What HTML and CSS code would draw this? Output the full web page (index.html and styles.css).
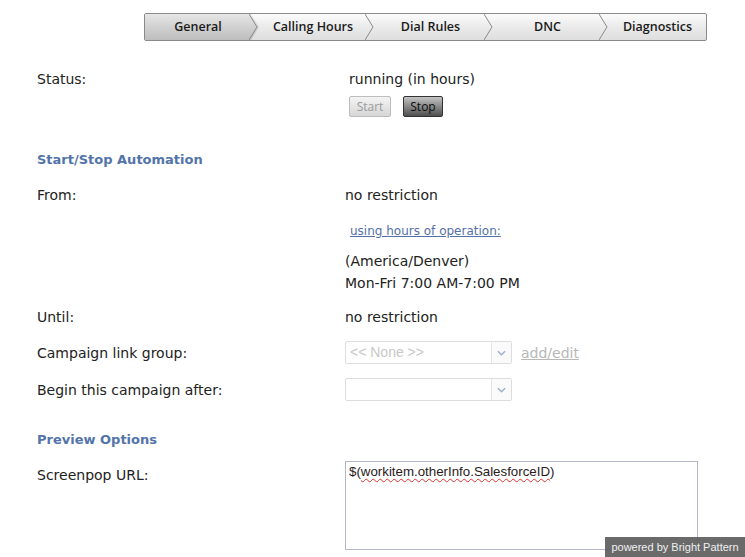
FILE: index.html
```html
<!DOCTYPE html>
<html>
<head>
<meta charset="utf-8">
<link rel="stylesheet" href="styles.css">
</head>
<body>
<div class="page">
  <div class="tabbar">
    <div class="tab active t1">General<svg class="chev" viewBox="0 0 10 26" width="10" height="26"><polyline points="0,0 8,13 0,26" fill="none" stroke="#8a8a8a" stroke-width="1"/></svg></div>
    <div class="tab t2">Calling Hours<svg class="chev" viewBox="0 0 10 26" width="10" height="26"><polyline points="0,0 8,13 0,26" fill="none" stroke="#8a8a8a" stroke-width="1"/></svg></div>
    <div class="tab t3">Dial Rules<svg class="chev" viewBox="0 0 10 26" width="10" height="26"><polyline points="0,0 8,13 0,26" fill="none" stroke="#8a8a8a" stroke-width="1"/></svg></div>
    <div class="tab t4">DNC<svg class="chev" viewBox="0 0 10 26" width="10" height="26"><polyline points="0,0 8,13 0,26" fill="none" stroke="#8a8a8a" stroke-width="1"/></svg></div>
    <div class="tab t5">Diagnostics</div>
  </div>

  <div class="row status-row">
    <div class="label">Status:</div>
    <div class="value status-value">
      <div>running (in hours)</div>
      <div class="buttons">
        <span class="btn disabled">Start</span>
        <span class="btn dark">Stop</span>
      </div>
    </div>
  </div>

  <div class="heading h1">Start/Stop Automation</div>

  <div class="row from-row">
    <div class="label">From:</div>
    <div class="value">
      <div>no restriction</div>
      <div class="hours-link"><a>using hours of operation:</a></div>
      <div class="tz">(America/Denver)</div>
      <div class="tz2">Mon-Fri 7:00 AM-7:00 PM</div>
    </div>
  </div>

  <div class="row until-row">
    <div class="label">Until:</div>
    <div class="value">no restriction</div>
  </div>

  <div class="row sel-row first-sel">
    <div class="label">Campaign link group:</div>
    <div class="value sel-wrap">
      <div class="select"><span class="sel-text">&lt;&lt; None &gt;&gt;</span><span class="sel-arrow"><svg viewBox="0 0 10 6" width="9" height="6"><polyline points="1,1 5,5 9,1" fill="none" stroke="#9fb0c8" stroke-width="1.6"/></svg></span></div>
      <a class="addedit">add/edit</a>
    </div>
  </div>

  <div class="row sel-row second-sel">
    <div class="label">Begin this campaign after:</div>
    <div class="value sel-wrap">
      <div class="select"><span class="sel-text"></span><span class="sel-arrow"><svg viewBox="0 0 10 6" width="9" height="6"><polyline points="1,1 5,5 9,1" fill="none" stroke="#9fb0c8" stroke-width="1.6"/></svg></span></div>
    </div>
  </div>

  <div class="heading h2">Preview Options</div>

  <div class="row url-row">
    <div class="label url-label">Screenpop URL:</div>
    <div class="value">
      <div class="textarea">$(<span class="spell">workitem.otherInfo.SalesforceID</span>)</div>
    </div>
  </div>
</div>
<div class="powered">powered by Bright Pattern</div>
</body>
</html>
```
FILE: styles.css
```css
html, body {
  margin: 0;
  padding: 0;
  background: #fff;
}
body {
  font-family: "DejaVu Sans", Verdana, sans-serif;
  font-size: 14px;
  color: #222;
  width: 745px;
  height: 557px;
  overflow: hidden;
  position: relative;
}
.page {
  padding: 13px 0 0 37px;
}
.tabbar {
  display: flex;
  margin-left: 107px;
  width: 561px;
  height: 26px;
  border: 1px solid #8a8a8a;
  border-radius: 2px;
  background: linear-gradient(#fbfbfb, #e9e9e9 55%, #dedede);
  font-family: "Open Sans", "Liberation Sans", sans-serif;
  font-weight: 600;
  font-size: 12.5px;
  color: #1a1a1a;
}
.tab {
  position: relative;
  flex: none;
  display: flex;
  align-items: center;
  justify-content: center;
  line-height: 26px;
  box-sizing: border-box;
  padding-left: 8px;
}
.t1 { width: 106px; padding-left: 0; }
.t2 { width: 116px; }
.t3 { width: 119px; }
.t4 { width: 115px; }
.t5 { flex: 1 1 auto; }
.tab.active {
  background: linear-gradient(#e6e6e6, #cfcfcf 55%, #bdbdbd);
}
.tab.active::after {
  content: "";
  position: absolute;
  right: -8px;
  top: 0;
  width: 8px;
  height: 26px;
  background: linear-gradient(#e6e6e6, #cfcfcf 55%, #bdbdbd);
  clip-path: polygon(0 0, 100% 50%, 0 100%);
  z-index: 1;
}
.chev {
  position: absolute;
  right: -8px;
  top: 0;
  z-index: 2;
}
.row {
  display: flex;
}
.label {
  width: 308px;
  flex: none;
}
.status-row {
  margin-top: 29px;
  line-height: 18px;
}
.status-value {
  padding-left: 4px;
}
.buttons {
  display: flex;
  gap: 12px;
  margin-top: 8px;
}
.btn {
  display: inline-flex;
  align-items: center;
  justify-content: center;
  box-sizing: border-box;
  height: 21px;
  border-radius: 2px;
  font-family: "Open Sans", "Liberation Sans", sans-serif;
  font-size: 12px;
}
.btn.disabled {
  width: 42px;
  border: 1px solid #bdbdbd;
  background: linear-gradient(#f4f4f4, #d6d6d6);
  color: #9a9a9a;
}
.btn.dark {
  width: 40px;
  border: 1px solid #333;
  background: linear-gradient(#c4c4c4, #838383 55%, #4e4e4e);
  color: #0c0c0c;
}
.heading {
  font-weight: bold;
  color: #5374a9;
  font-size: 13px;
  line-height: 18px;
}
.h1 {
  margin-top: 34px;
}
.from-row {
  margin-top: 17px;
  line-height: 18px;
}
.hours-link {
  font-size: 12px;
  margin: 20px 0 0 5px;
  line-height: 14px;
}
.hours-link a, .addedit {
  text-decoration: underline;
}
.hours-link a {
  color: #5470a8;
}
.tz {
  margin-top: 12px;
  line-height: 22px;
}
.tz2 {
  line-height: 22px;
}
.until-row {
  margin-top: 14px;
  line-height: 18px;
}
.sel-row {
  align-items: center;
}
.first-sel {
  margin-top: 15px;
}
.second-sel {
  margin-top: 14px;
}
.sel-wrap {
  display: flex;
  align-items: center;
  gap: 9px;
}
.select {
  box-sizing: border-box;
  width: 167px;
  height: 23px;
  border: 1px solid #dcdde0;
  border-radius: 2px;
  display: flex;
  background: #fff;
}
.sel-text {
  flex: 1;
  color: #c8c8c8;
  font-family: "Liberation Sans", Arial, sans-serif;
  font-size: 14px;
  line-height: 21px;
  padding-left: 4px;
}
.sel-arrow {
  width: 19px;
  border-left: 1px solid #e4e4e6;
  display: flex;
  align-items: center;
  justify-content: center;
  background: #fafafa;
}
.addedit {
  color: #b8b8b8;
  font-size: 14px;
}
.h2 {
  margin-top: 30px;
}
.url-row {
  margin-top: 12px;
}
.url-label {
  padding-top: 5px;
  line-height: 18px;
}
.textarea {
  box-sizing: border-box;
  width: 353px;
  height: 89px;
  border: 1px solid #b4b7c9;
  padding: 2px 2px 2px 3px;
  font-family: "Liberation Sans", Arial, sans-serif;
  font-size: 13.3px;
  color: #2a1a1a;
  line-height: 16px;
}
.spell {
  text-decoration: underline wavy #e03030;
  text-decoration-thickness: 1px;
  text-underline-offset: 2px;
}
.powered {
  position: absolute;
  right: 0;
  bottom: 0;
  width: 140px;
  height: 20px;
  background: rgba(90, 90, 90, 0.9);
  color: #f0f0f0;
  font-family: "Liberation Sans", Arial, sans-serif;
  font-size: 11px;
  line-height: 20px;
  text-align: center;
}
```
